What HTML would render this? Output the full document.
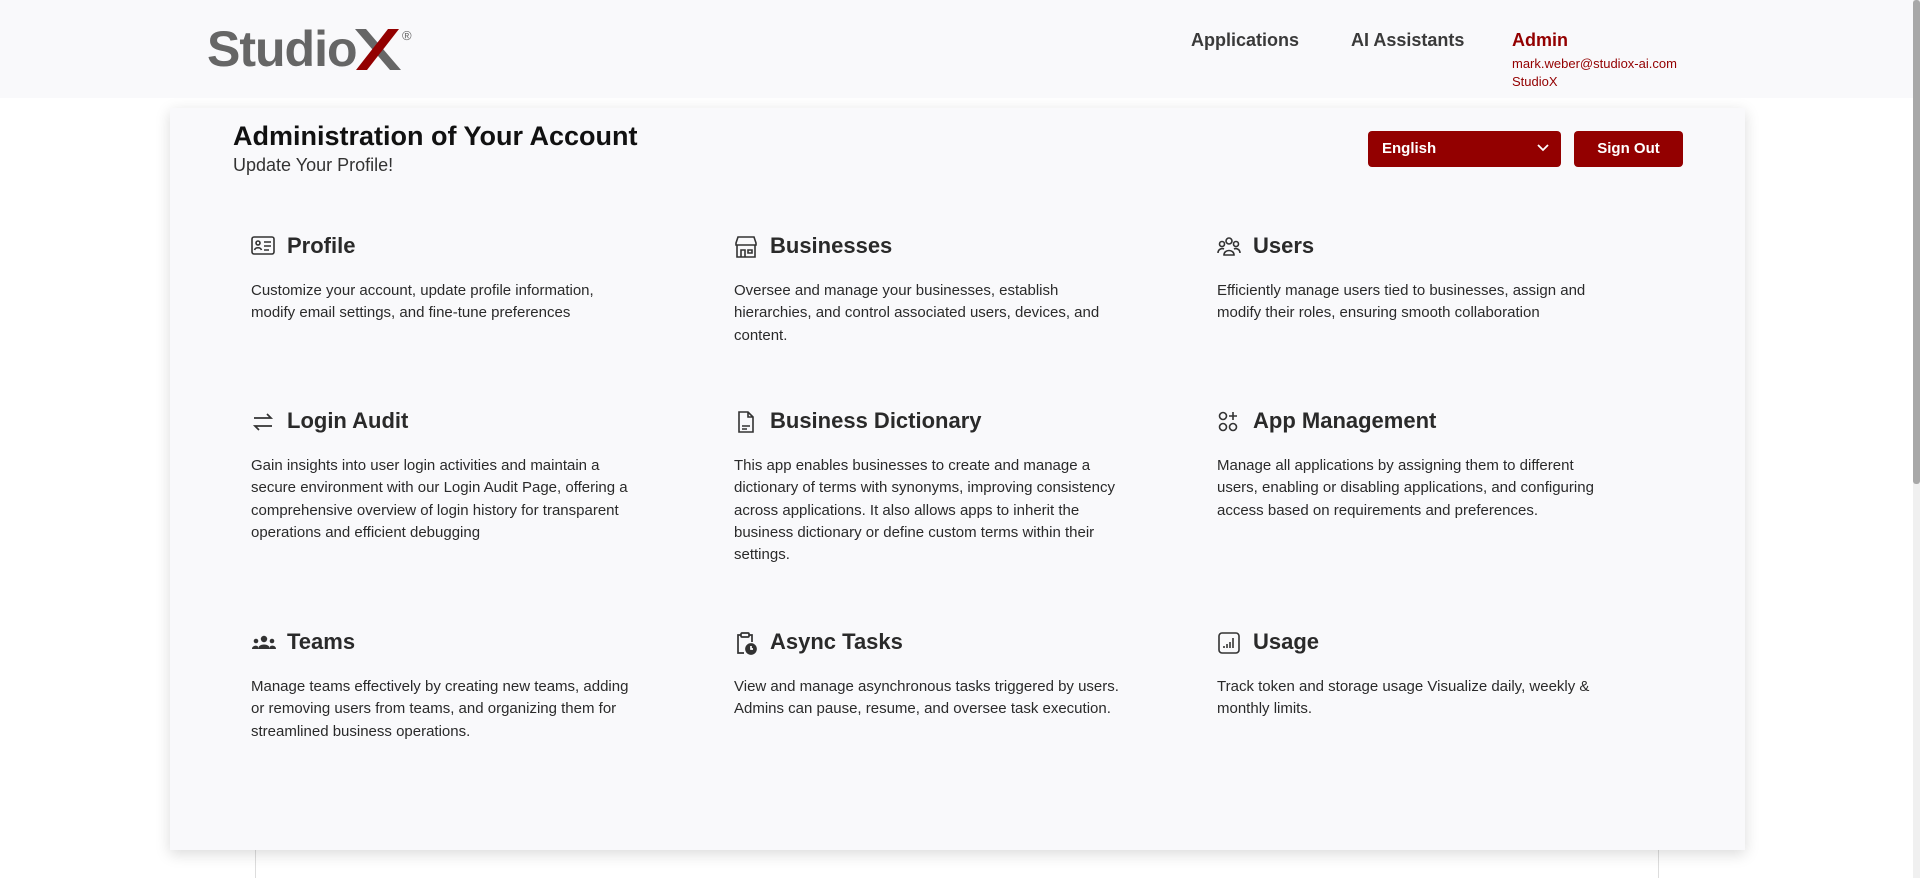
<!DOCTYPE html>
<html><head><meta charset="utf-8"><style>
*{margin:0;padding:0;box-sizing:border-box}
body{width:1920px;height:878px;overflow:hidden;background:#fff;font-family:"Liberation Sans",sans-serif;position:relative;color:#222}
.hdr{position:absolute;left:0;top:0;width:1913px;height:98px;background:#f9f9fb}
.logo{position:absolute;left:207px;top:20px;font-size:50px;font-weight:bold;color:#666;letter-spacing:-1px}
.reg{position:absolute;left:402px;top:28px;font-size:13px;color:#666}
.nav{position:absolute;top:30px;font-size:18px;font-weight:bold;color:#3a3a3a}
.admin{color:#930000}
.sm{position:absolute;left:1512px;font-size:13px;color:#930000}
.card{position:absolute;left:170px;top:108px;width:1575px;height:742px;background:#f9f9fb;box-shadow:0 4px 14px rgba(0,0,0,.15)}
.vl{position:absolute;top:850px;width:1px;height:28px;background:#ddd}
h1{position:absolute;left:233px;top:121px;font-size:27px;font-weight:bold;color:#111}
.sub{position:absolute;left:233px;top:155px;font-size:18px;color:#333}
.sel{position:absolute;left:1368px;top:131px;width:193px;height:36px;background:#930000;border-radius:4px;color:#fff;font-weight:bold;font-size:15px;padding:9px 0 0 14px}
.sel svg{position:absolute;right:12px;top:13px}
.btn{position:absolute;left:1574px;top:131px;width:109px;height:36px;background:#930000;border-radius:4px;color:#fff;font-weight:bold;font-size:15px;text-align:center;line-height:36px}
.it{position:absolute;width:440px}
.it h2{font-size:22px;font-weight:bold;color:#2a2a2a;height:30px;line-height:30px;padding-left:36px;position:relative}
.it h2 svg{position:absolute;left:0;top:4px}
.it p{margin-top:19px;font-size:15px;line-height:22.3px;color:#2a2a2a}
.sb{position:absolute;right:0;top:0;width:7px;height:878px;background:#f0f0f0}
.sb div{width:7px;height:484px;background:#a8a8a8;border-radius:3px}
</style></head><body>
<div class="hdr"></div>
<div class="logo">Studio</div>
<svg style="position:absolute;left:355px;top:29px" width="46" height="41"><polygon points="0,0 11,0 46,41 35,41" fill="#666"/><polygon points="33,0 44,0 12,41 1,41" fill="#930000"/></svg>
<div class="reg">®</div>
<div class="nav" style="left:1191px">Applications</div>
<div class="nav" style="left:1351px">AI Assistants</div>
<div class="nav admin" style="left:1512px">Admin</div>
<div class="sm" style="top:56px">mark.weber@studiox-ai.com</div>
<div class="sm" style="top:74px">StudioX</div>
<div class="vl" style="left:255px"></div><div class="vl" style="left:1658px"></div>
<div class="card"></div>
<h1>Administration of Your Account</h1>
<div class="sub">Update Your Profile!</div>
<div class="sel">English<svg width="12" height="8"><path d="M1 1l5 5 5-5" stroke="#fff" stroke-width="1.8" fill="none"/></svg></div>
<div class="btn">Sign Out</div>

<div class="it" style="left:251px;top:231px"><h2><svg width="24" height="22" fill="none" stroke="#333" stroke-width="1.6"><rect x="1" y="2" width="22" height="17" rx="2"/><circle cx="7" cy="8" r="2"/><path d="M3.5 15c1-3 6-3 7 0M13 7h7M13 11h7M13 15h5"/></svg>Profile</h2><p>Customize your account, update profile information,<br>modify email settings, and fine-tune preferences</p></div>
<div class="it" style="left:734px;top:231px"><h2><svg width="24" height="24" fill="none" stroke="#333" stroke-width="1.6"><path d="M2 8l2-6h16l2 6v2H2zM3 10v12h18V10M7 22v-7h4v7M14 15h4v3h-4z"/></svg>Businesses</h2><p>Oversee and manage your businesses, establish<br>hierarchies, and control associated users, devices, and<br>content.</p></div>
<div class="it" style="left:1217px;top:231px"><h2><svg width="24" height="24" fill="none" stroke="#333" stroke-width="1.6"><circle cx="12" cy="6" r="3"/><circle cx="5" cy="9" r="2.5"/><circle cx="19" cy="9" r="2.5"/><path d="M7 20c0-6 10-6 10 0zM1 18c0-4 4-5 6-4M23 18c0-4-4-5-6-4"/></svg>Users</h2><p>Efficiently manage users tied to businesses, assign and<br>modify their roles, ensuring smooth collaboration</p></div>

<div class="it" style="left:251px;top:406px"><h2><svg width="24" height="24" fill="none" stroke="#333" stroke-width="1.7"><path d="M3 8h17l-4-4M21 16H4l4 4"/></svg>Login Audit</h2><p>Gain insights into user login activities and maintain a<br>secure environment with our Login Audit Page, offering a<br>comprehensive overview of login history for transparent<br>operations and efficient debugging</p></div>
<div class="it" style="left:734px;top:406px"><h2><svg width="24" height="24" fill="none" stroke="#333" stroke-width="1.6"><path d="M5 2h9l5 5v15H5zM14 2v5h5M8 16h8M8 19h5"/></svg>Business Dictionary</h2><p>This app enables businesses to create and manage a<br>dictionary of terms with synonyms, improving consistency<br>across applications. It also allows apps to inherit the<br>business dictionary or define custom terms within their<br>settings.</p></div>
<div class="it" style="left:1217px;top:406px"><h2><svg width="24" height="24" fill="none" stroke="#333" stroke-width="1.6"><circle cx="6" cy="6" r="3.5"/><circle cx="6" cy="17" r="3.5"/><circle cx="16" cy="17" r="3.5"/><path d="M16 2v8M12 6h8"/></svg>App Management</h2><p>Manage all applications by assigning them to different<br>users, enabling or disabling applications, and configuring<br>access based on requirements and preferences.</p></div>

<div class="it" style="left:251px;top:627px"><h2><svg width="26" height="24" fill="#333"><circle cx="13" cy="8" r="3.2"/><path d="M7 18c0-6 12-6 12 0z"/><circle cx="5" cy="10" r="2.3"/><circle cx="21" cy="10" r="2.3"/><path d="M1 18c0-4 6-4 6-2v2zM25 18c0-4-6-4-6-2v2z"/></svg>Teams</h2><p>Manage teams effectively by creating new teams, adding<br>or removing users from teams, and organizing them for<br>streamlined business operations.</p></div>
<div class="it" style="left:734px;top:627px"><h2><svg width="24" height="26" fill="none" stroke="#333" stroke-width="1.7"><path d="M10 22H4V4h3M15 4h3v7"/><rect x="7" y="2" width="8" height="4" rx="1"/><circle cx="17" cy="18" r="5" fill="#333"/><path d="M17 15v3h2" stroke="#fff"/></svg>Async Tasks</h2><p>View and manage asynchronous tasks triggered by users.<br>Admins can pause, resume, and oversee task execution.</p></div>
<div class="it" style="left:1217px;top:627px"><h2><svg width="24" height="24" fill="none" stroke="#333" stroke-width="1.6"><rect x="2" y="2" width="20" height="20" rx="3"/><path d="M7 17v-2M10 17v-4M13 17v-6M16 17V7"/></svg>Usage</h2><p>Track token and storage usage Visualize daily, weekly &amp;<br>monthly limits.</p></div>
<div class="sb"><div></div></div>
</body></html>
